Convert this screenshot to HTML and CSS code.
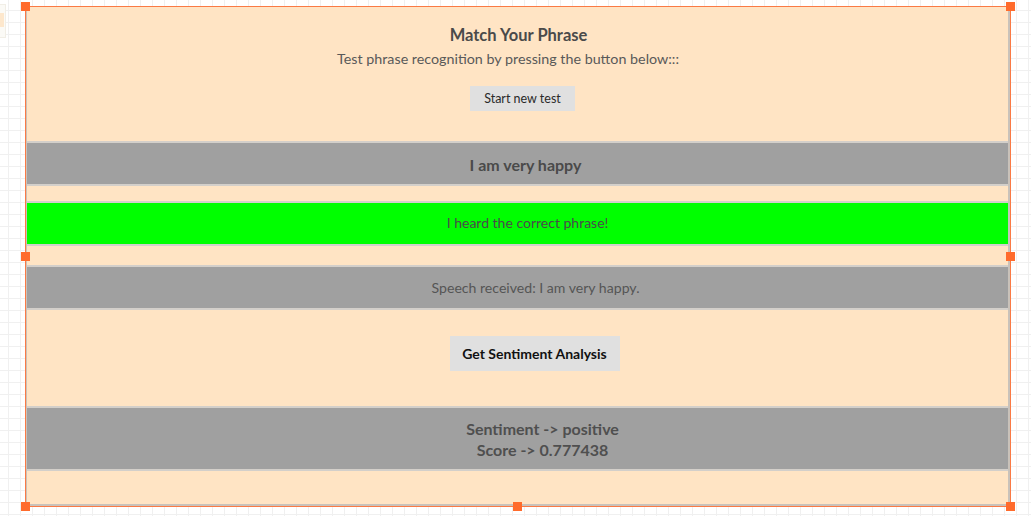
FILE: index.html
```html
<!DOCTYPE html>
<html>
<head>
<meta charset="utf-8">
<link rel="stylesheet" href="styles.css">
</head>
<body>
<div class="canvas">
  <div class="stub"><div class="stub-inner"></div></div>
  <div class="frame">
    <div class="content">
      <section class="header">
        <h1 class="title">Match Your Phrase</h1>
        <p class="subtitle">Test phrase recognition by pressing the button below:::</p>
        <button class="btn-small">Start new test</button>
      </section>
      <div class="bar bar-gray bar-phrase">I am very happy</div>
      <div class="spacer-a"></div>
      <div class="bar bar-green">I heard the correct phrase!</div>
      <div class="spacer-b"></div>
      <div class="bar bar-gray bar-speech">Speech received: I am very happy.</div>
      <section class="analysis">
        <button class="btn-big">Get Sentiment Analysis</button>
      </section>
      <div class="bar bar-gray bar-result">Sentiment -&gt; positive<br>Score -&gt; 0.777438</div>
      <div class="footer-space"></div>
    </div>
    <span class="handle h-tl"></span>
    <span class="handle h-tr"></span>
    <span class="handle h-ml"></span>
    <span class="handle h-mr"></span>
    <span class="handle h-bl"></span>
    <span class="handle h-bm"></span>
    <span class="handle h-br"></span>
  </div>
</div>
</body>
</html>
```
FILE: styles.css
```css
html, body {
  margin: 0;
  padding: 0;
}
body {
  width: 1031px;
  height: 516px;
  overflow: hidden;
  font-family: Lato, "Open Sans", sans-serif;
  background-color: #ffffff;
  background-image:
    linear-gradient(to right, #f0f0f0 1px, transparent 1px),
    linear-gradient(to bottom, #f0f0f0 1px, transparent 1px);
  background-size: 12px 12px;
  background-position: 8px 10px;
}
.canvas {
  position: relative;
  width: 1031px;
  height: 516px;
  padding: 6px 0 0 25px;
  box-sizing: border-box;
}
.stub {
  position: absolute;
  left: -4px;
  top: 4px;
  width: 10px;
  height: 34px;
  border: 1px solid #f1eee6;
  background: #fbfaf6;
  box-sizing: border-box;
}
.stub-inner {
  position: absolute;
  left: 0;
  top: 8px;
  width: 7px;
  height: 14px;
  background: #fde7cc;
}
.frame {
  position: relative;
  width: 986px;
  height: 501px;
  border: 1px solid #fa7a45;
  box-sizing: border-box;
}
.content {
  height: 100%;
  box-sizing: border-box;
  background: #ffe4c4;
  border-left: 1px solid #c9c2ba;
  border-right: 2px solid #c9c2ba;
  border-bottom: 2px solid #c9c2ba;
  display: flex;
  flex-direction: column;
}
.header {
  display: flex;
  flex-direction: column;
  align-items: center;
  padding: 18px 0 30px;
}
.title {
  margin: 0 0 0 2px;
  font-size: 16.5px;
  line-height: 20px;
  font-weight: 700;
  color: #4a4a4a;
}
.subtitle {
  margin: 5px 19px 0 0;
  font-size: 14.3px;
  line-height: 18px;
  color: #595959;
}
.btn-small {
  margin-top: 18px;
  margin-left: 10px;
  height: 25px;
  width: 105px;
  padding: 0;
  border: none;
  background: #e0e0e0;
  font-family: Lato, sans-serif;
  font-size: 12.5px;
  color: #2a2a2a;
}
.bar {
  border-top: 2px solid #d3cfca;
  border-bottom: 2px solid #d3cfca;
  height: 41px;
  line-height: 41px;
  text-align: center;
  font-size: 14px;
  color: #555555;
  flex: none;
}
.bar-gray {
  background: #a0a0a0;
}
.bar-green {
  background: #00ff00;
  color: #4a4a4a;
  line-height: 39px;
  padding-left: 20px;
}
.bar-phrase {
  font-size: 16px;
  font-weight: 700;
  color: #4a4a4a;
  line-height: 44px;
  padding-left: 16px;
}
.bar-speech {
  font-size: 14.1px;
  padding-left: 36px;
}
.spacer-a {
  height: 15px;
  flex: none;
}
.spacer-b {
  height: 19px;
  flex: none;
}
.analysis {
  display: flex;
  justify-content: center;
  padding: 26px 0 35px 34px;
}
.btn-big {
  height: 35px;
  width: 170px;
  padding: 0;
  border: none;
  background: #e0e0e0;
  font-family: Lato, sans-serif;
  font-size: 14px;
  font-weight: 700;
  color: #111111;
}
.bar-result {
  height: auto;
  line-height: 21px;
  padding: 10px 0 9px 50px;
  font-size: 16px;
  font-weight: 700;
  color: #4f4f4f;
}
.footer-space {
  flex: 1;
}
.handle {
  position: absolute;
  width: 9px;
  height: 9px;
  background: #ff6b2c;
}
.h-tl { left: -5px; top: -5px; }
.h-tr { right: -5px; top: -5px; }
.h-ml { left: -5px; top: 245px; }
.h-mr { right: -5px; top: 245px; }
.h-bl { left: -5px; bottom: -5px; }
.h-bm { left: 487px; bottom: -5px; }
.h-br { right: -5px; bottom: -5px; }
```
